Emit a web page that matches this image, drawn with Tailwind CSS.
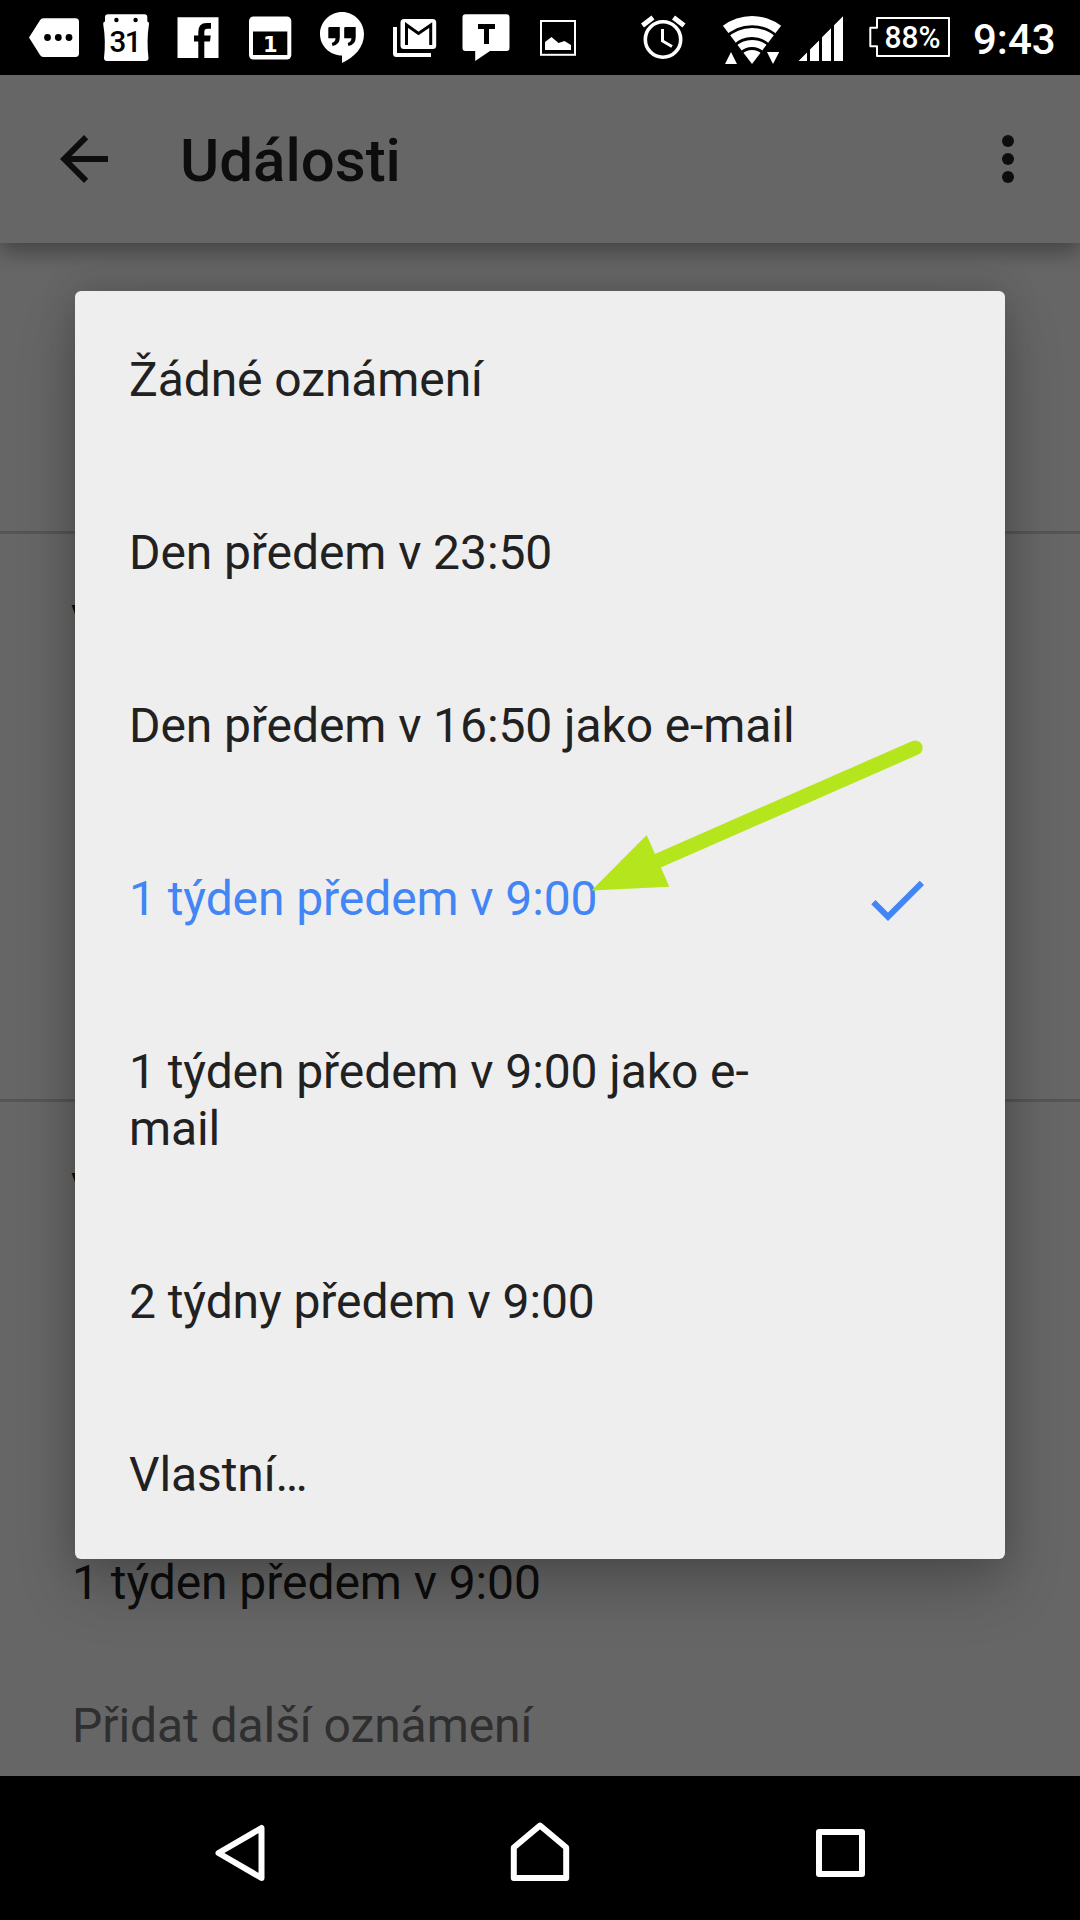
<!DOCTYPE html>
<html lang="cs">
<head>
<meta charset="utf-8">
<title>Události</title>
<script src="https://cdn.jsdelivr.net/npm/@tailwindcss/browser@4"></script>
</head>
<body class="relative flex h-[1920px] w-[1080px] flex-col overflow-hidden bg-white font-[Roboto,sans-serif] text-[48px] leading-[57px] text-[#212121]">

<!-- Status bar -->
<div class="flex h-[75px] shrink-0 justify-between bg-black text-white">
  <div class="flex">
    <svg class="h-[75px] w-[92px]" viewBox="0 0 92 75"><path fill="#fff" d="M29 37.5 40 20.3Q41 18.3 43.500 18.300H75.500Q79 18.300 79 22V53.200Q79 57 75.500 57H43.500Q41 57 40 55Z"/><circle cx="47.500" cy="37.500" r="3.400"/><circle cx="58.300" cy="37.500" r="3.400"/><circle cx="69" cy="37.500" r="3.400"/></svg>
    <svg class="h-[75px] w-[71px]" viewBox="92 0 71 75"><path fill="#fff" d="M108 14.200H144.500Q147.300 14.200 147.300 17V21.500Q149.200 21.800 149 24Q146.400 41 148.500 58Q148.500 61 145.500 61H107Q104 61 104 58Q106 41 103.200 24Q103 21.800 105 21.500V17Q105 14.200 108 14.200Z"/><circle cx="116.400" cy="20" r="2.200"/><circle cx="135.600" cy="20" r="2.200"/><text x="124.700" y="52" text-anchor="middle" font-size="29.500" font-weight="500" letter-spacing="-1.500">31</text></svg>
    <svg class="h-[75px] w-[71px]" viewBox="163 0 71 75"><path fill="#fff" d="M177.500 17.300H218.500V58H177.500Z"/><path d="M198.300 58V41.500H194V35.500H198.300V32Q198.300 23 206.500 23H211V28.700H207.500Q204.300 28.700 204.300 32V35.500H210.700L210 41.500H204.300V58Z"/></svg>
    <svg class="h-[75px] w-[71px]" viewBox="234 0 71 75"><rect x="249" y="16.500" width="42.300" height="43" rx="4.500" fill="#fff"/><path d="M253 31.500H287.300V55H253Z"/><text x="270.200" y="51.500" text-anchor="middle" font-size="21" font-weight="700" font-family="DejaVu Sans, sans-serif" fill="#fff">1</text></svg>
    <svg class="h-[75px] w-[75px]" viewBox="305 0 75 75"><path fill="#fff" d="M342 12C354 12 364 22 364 34C364 47 355 57 342 63V55.500C330 55.500 320 46 320 34C320 22 330 12 342 12Z"/><path d="M329.500 27H339.800V37.500Q339.800 44.500 332.500 46L331.800 43Q335.500 42 335.500 38.300H328.300V28.200Q328.300 27 329.500 27ZM345.400 27H355.700V37.500Q355.700 44.500 348.400 46L347.700 43Q351.400 42 351.400 38.300H344.200V28.200Q344.200 27 345.400 27Z"/></svg>
    <svg class="h-[75px] w-[70px]" viewBox="380 0 70 75"><rect x="400.500" y="19" width="35.700" height="30" rx="3.500" fill="#fff"/><path d="M406.500 45V25L418.500 33.500 430.700 25V45" fill="none" stroke="#000" stroke-width="3"/><path fill="#fff" d="M393 27H397V53H431V57H396.500Q393 57 393 53.500Z"/></svg>
    <svg class="h-[75px] w-[75px]" viewBox="450 0 75 75"><path fill="#fff" d="M465.500 14.300H506.500Q509.500 14.300 509.500 17.300V48Q509.500 51 506.500 51H490L475.200 61V51H465.500Q462.500 51 462.500 48V17.300Q462.500 14.300 465.500 14.300Z"/><path d="M478 24H495V29H489V44H484V29H478Z"/></svg>
    <svg class="h-[75px] w-[65px]" viewBox="525 0 65 75"><rect x="541" y="21" width="34" height="33.800" fill="none" stroke="#fff" stroke-width="2"/><path fill="#fff" d="M545 50V42L551.500 37 558.500 43 564.500 41 571 45V50Z"/></svg>
  </div>
  <div class="flex">
    <svg class="h-[75px] w-[70px]" viewBox="630 0 70 75" fill="none" stroke="#fff"><circle cx="663" cy="39.500" r="17.700" stroke-width="3.600"/><path stroke-width="3" d="M662.500 29V41L672 46.500"/><path stroke-width="5" d="M642.500 25.500 653 17.500M673.500 17.500 684 25.500"/></svg>
    <svg class="h-[75px] w-[90px]" viewBox="700 0 90 75"><path fill="#fff" d="M752 64 722.900 25.800A48 48 0 0 1 781.100 25.800Z"/><g fill="none" stroke="#000" stroke-width="2.800"><circle cx="752" cy="64" r="37.400"/><circle cx="752" cy="64" r="25.500"/><circle cx="752" cy="64" r="15.500"/></g><path fill="#fff" d="M725 64 731 52 737 64ZM767 52H779.200L773 64Z"/></svg>
    <svg class="h-[75px] w-[70px]" viewBox="790 0 70 75"><path fill="#fff" d="M798.500 61 807 52.500V61ZM810 61V49.500L819 40.500V61ZM822 61V37.200L831 28.200V61ZM834 61V25.200L843 16.200V61Z"/></svg>
    <svg class="h-[75px] w-[100px]" viewBox="860 0 100 75"><path fill="none" stroke="#fff" stroke-width="2" stroke-linejoin="round" d="M877 18H949V56H877V46.300H870.300V27.700H877Z"/><text x="884.500" y="48" font-size="31" font-weight="500" fill="#fff" textLength="56" lengthAdjust="spacingAndGlyphs">88%</text></svg>
    <div class="w-[120px] pt-[10px] pl-[13px] text-[42px] leading-[60px] font-medium">9:43</div>
  </div>
</div>

<!-- App bar -->
<header class="z-0 flex h-[168px] shrink-0 items-center bg-white pr-9 pl-12 shadow-[0_10px_20px_rgba(0,0,0,0.32)]">
  <svg class="size-[72px]" viewBox="0 0 24 24" fill="#212121"><path d="M20 11H7.830l5.590-5.590L12 4l-8 8 8 8 1.410-1.410L7.830 13H20v-2z"/></svg>
  <h1 class="ml-[60px] flex-1 pt-0.5 text-[60px] font-medium">Události</h1>
  <svg class="size-[72px]" viewBox="0 0 24 24" fill="#212121"><circle cx="12" cy="6" r="2"/><circle cx="12" cy="12" r="2"/><circle cx="12" cy="18" r="2"/></svg>
</header>

<!-- Settings page -->
<main class="flex flex-1 flex-col">
  <section class="h-[291px] border-b-3 border-[#d4d4d4]"></section>
  <section class="h-[568px] border-b-3 border-[#d4d4d4] pt-[58px] pl-[71px] text-[42px] text-[#212121]">V</section>
  <section class="flex-1 pl-[72px]">
    <div class="-ml-px h-[452px] pt-[58px] text-[42px] text-[#212121]">V</div>
    <div class="h-[143px] tracking-[-0.07px]">1 týden předem v 9:00</div>
    <div class="tracking-[-0.07px] text-[#757575]">Přidat další oznámení</div>
  </section>
</main>

<!-- Navigation bar -->
<nav class="flex h-[144px] shrink-0 items-center justify-center gap-[180px] bg-black">
  <svg class="h-[144px] w-[120px]" viewBox="180 1776 120 144" fill="none" stroke="#fff" stroke-width="6" stroke-linejoin="round"><path d="M218.500 1853 261.500 1828V1878Z"/></svg>
  <svg class="h-[144px] w-[120px]" viewBox="480 1776 120 144" fill="none" stroke="#fff" stroke-width="6" stroke-linejoin="round"><path d="M540 1825.500 566.200 1847.500V1878H513.800V1847.500Z"/></svg>
  <svg class="h-[144px] w-[120px]" viewBox="780 1776 120 144" fill="none" stroke="#fff" stroke-width="6" stroke-linejoin="round"><path d="M819 1832H862V1874H819Z"/></svg>
</nav>

<!-- Scrim and dialog -->
<div class="absolute top-[75px] left-0 flex h-[1701px] w-full items-start justify-center overflow-hidden bg-black/60 pt-[216px]">
  <ul class="w-[930px] rounded-[6px] bg-[#eeeeee] tracking-[-0.09px] shadow-[0_30px_60px_rgba(0,0,0,0.2),0_0_36px_rgba(0,0,0,0.17)]">
    <li class="pt-[60px] pb-14 pl-[54px]">Žádné oznámení</li>
    <li class="pt-[60px] pb-14 pl-[54px]">Den předem v 23:50</li>
    <li class="pt-[60px] pb-14 pl-[54px]">Den předem v 16:50 jako e-mail</li>
    <li class="flex items-center justify-between pr-[72px] pl-[54px] text-[#4285f4]">
      <span class="pt-[60px] pb-14">1 týden předem v 9:00</span>
      <svg class="mt-[6px] size-[72px]" viewBox="0 0 24 24" fill="currentColor"><path d="M9 16.170L4.830 12l-1.420 1.410L9 19 21 7l-1.410-1.410z"/></svg>
    </li>
    <li class="pt-[60px] pr-[190px] pb-14 pl-[54px]">1 týden předem v 9:00 jako e-<wbr>mail</li>
    <li class="pt-[60px] pb-14 pl-[54px]">2 týdny předem v 9:00</li>
    <li class="pt-[60px] pb-14 pl-[54px]">Vlastní…</li>
  </ul>
</div>

<!-- Pointer annotation -->
<svg class="absolute top-[720px] left-[580px] h-[190px] w-[360px]" viewBox="580 720 360 190"><path d="M915.300 747.800 655 862" stroke="#b5e61d" stroke-width="14.800" stroke-linecap="round"/><path fill="#b5e61d" d="M591.500 890.500 646.700 835 669.300 886.700Z"/></svg>
</body>
</html>
